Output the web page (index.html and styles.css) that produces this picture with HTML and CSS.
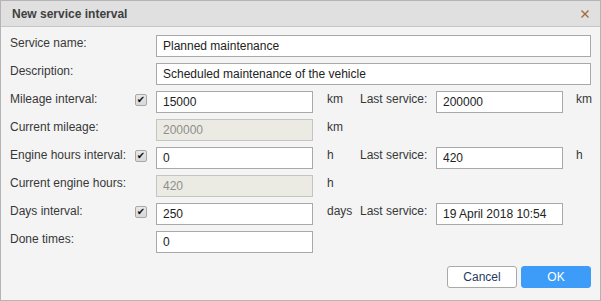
FILE: index.html
```html
<!DOCTYPE html>
<html lang="en">
<head>
  <meta charset="UTF-8">
  <title>New service interval</title>
  <link rel="stylesheet" href="styles.css">
</head>
<body>

  <div class="dialog">
    <div class="dialog-header">
      <span class="dialog-title">New service interval</span>
      <span class="close">
        <svg width="8" height="8" viewBox="0 0 8 8"><path d="M0.5 0.5 L7.5 7.5 M7.5 0.5 L0.5 7.5" stroke="#a0683a" stroke-width="1.3" fill="none"/></svg>
      </span>
    </div>

    <form class="form">
      <div class="row">
        <label class="lbl">Service name:</label>
        <span></span>
        <input class="inp wide" type="text" value="Planned maintenance">
      </div>

      <div class="row">
        <label class="lbl">Description:</label>
        <span></span>
        <input class="inp wide" type="text" value="Scheduled maintenance of the vehicle">
      </div>

      <div class="row">
        <label class="lbl">Mileage interval:</label>
        <span class="check"><span class="box">&#10004;</span></span>
        <input class="inp" type="text" value="15000">
        <span class="unit">km</span>
        <span class="lbl">Last service:</span>
        <input class="inp" type="text" value="200000">
        <span class="unit unit2">km</span>
      </div>

      <div class="row">
        <label class="lbl">Current mileage:</label>
        <span></span>
        <input class="inp disabled" type="text" value="200000" disabled>
        <span class="unit">km</span>
      </div>

      <div class="row">
        <label class="lbl">Engine hours interval:</label>
        <span class="check"><span class="box">&#10004;</span></span>
        <input class="inp" type="text" value="0">
        <span class="unit">h</span>
        <span class="lbl">Last service:</span>
        <input class="inp" type="text" value="420">
        <span class="unit unit2">h</span>
      </div>

      <div class="row">
        <label class="lbl">Current engine hours:</label>
        <span></span>
        <input class="inp disabled" type="text" value="420" disabled>
        <span class="unit">h</span>
      </div>

      <div class="row">
        <label class="lbl">Days interval:</label>
        <span class="check"><span class="box">&#10004;</span></span>
        <input class="inp" type="text" value="250">
        <span class="unit">days</span>
        <span class="lbl">Last service:</span>
        <input class="inp" type="text" value="19 April 2018 10:54">
      </div>

      <div class="row">
        <label class="lbl">Done times:</label>
        <span></span>
        <input class="inp" type="text" value="0">
      </div>
    </form>

    <div class="buttons">
      <button class="btn">Cancel</button>
      <button class="btn btn-ok">OK</button>
    </div>
  </div>

</body>
</html>
```

FILE: styles.css
```css
* {
  margin: 0;
  padding: 0;
  box-sizing: border-box;
  font-family: "Liberation Sans", Arial, sans-serif;
}

body {
  width: 601px;
  height: 301px;
  overflow: hidden;
}

.dialog {
  width: 601px;
  height: 301px;
  border: 1px solid #b4b4b4;
  background: #f4f4f4;
}

.dialog-header {
  height: 26px;
  background: #e0e0e0;
  border-bottom: 1px solid #c6c6c6;
  display: flex;
  align-items: center;
  justify-content: space-between;
  padding: 0 11px 0 11px;
}

.dialog-title {
  font-size: 12px;
  font-weight: bold;
  color: #404040;
}

.close {
  display: flex;
  margin-top: 1px;
}

.form {
  display: flex;
  flex-direction: column;
  gap: 6px;
  padding: 8px 9px 0 9px;
}

.row {
  display: grid;
  grid-template-columns: 125px 21px 157px 47px 76px 127px 28px;
  height: 22px;
}

.lbl {
  font-size: 12px;
  line-height: 16px;
  color: #383838;
  white-space: nowrap;
}

.inp {
  height: 22px;
  border: 1px solid #a9a9a9;
  background: #fff;
  font-size: 12px;
  color: #222;
  padding: 0 6px;
  outline: none;
  width: 100%;
}

.inp.wide {
  grid-column: 3 / 8;
}

.inp.disabled {
  background: #ebebe4;
  border-color: #c4c4c4;
  color: #8e8e8e;
}

.unit {
  font-size: 12px;
  line-height: 16px;
  color: #383838;
  padding-left: 14px;
}

.unit2 {
  padding-left: 13px;
}

.check {
  padding-top: 3px;
}

.box {
  display: block;
  width: 12px;
  height: 12px;
  border: 1px solid #a8a8a8;
  border-radius: 2px;
  background: linear-gradient(#e8e8e8, #d8d8d8);
  color: #111;
  font-size: 10px;
  font-weight: bold;
  line-height: 10px;
  text-align: center;
  font-family: "DejaVu Sans", sans-serif;
}

.buttons {
  display: flex;
  justify-content: flex-end;
  gap: 4px;
  padding: 13px 9px 0 0;
}

.btn {
  width: 70px;
  height: 22px;
  border: 1px solid #a9a9a9;
  border-radius: 3px;
  background: #fff;
  color: #1f3a5c;
  font-size: 12px;
  cursor: pointer;
}

.btn-ok {
  background: #3d9cf7;
  border-color: #3d9cf7;
  color: #fff;
}
```
